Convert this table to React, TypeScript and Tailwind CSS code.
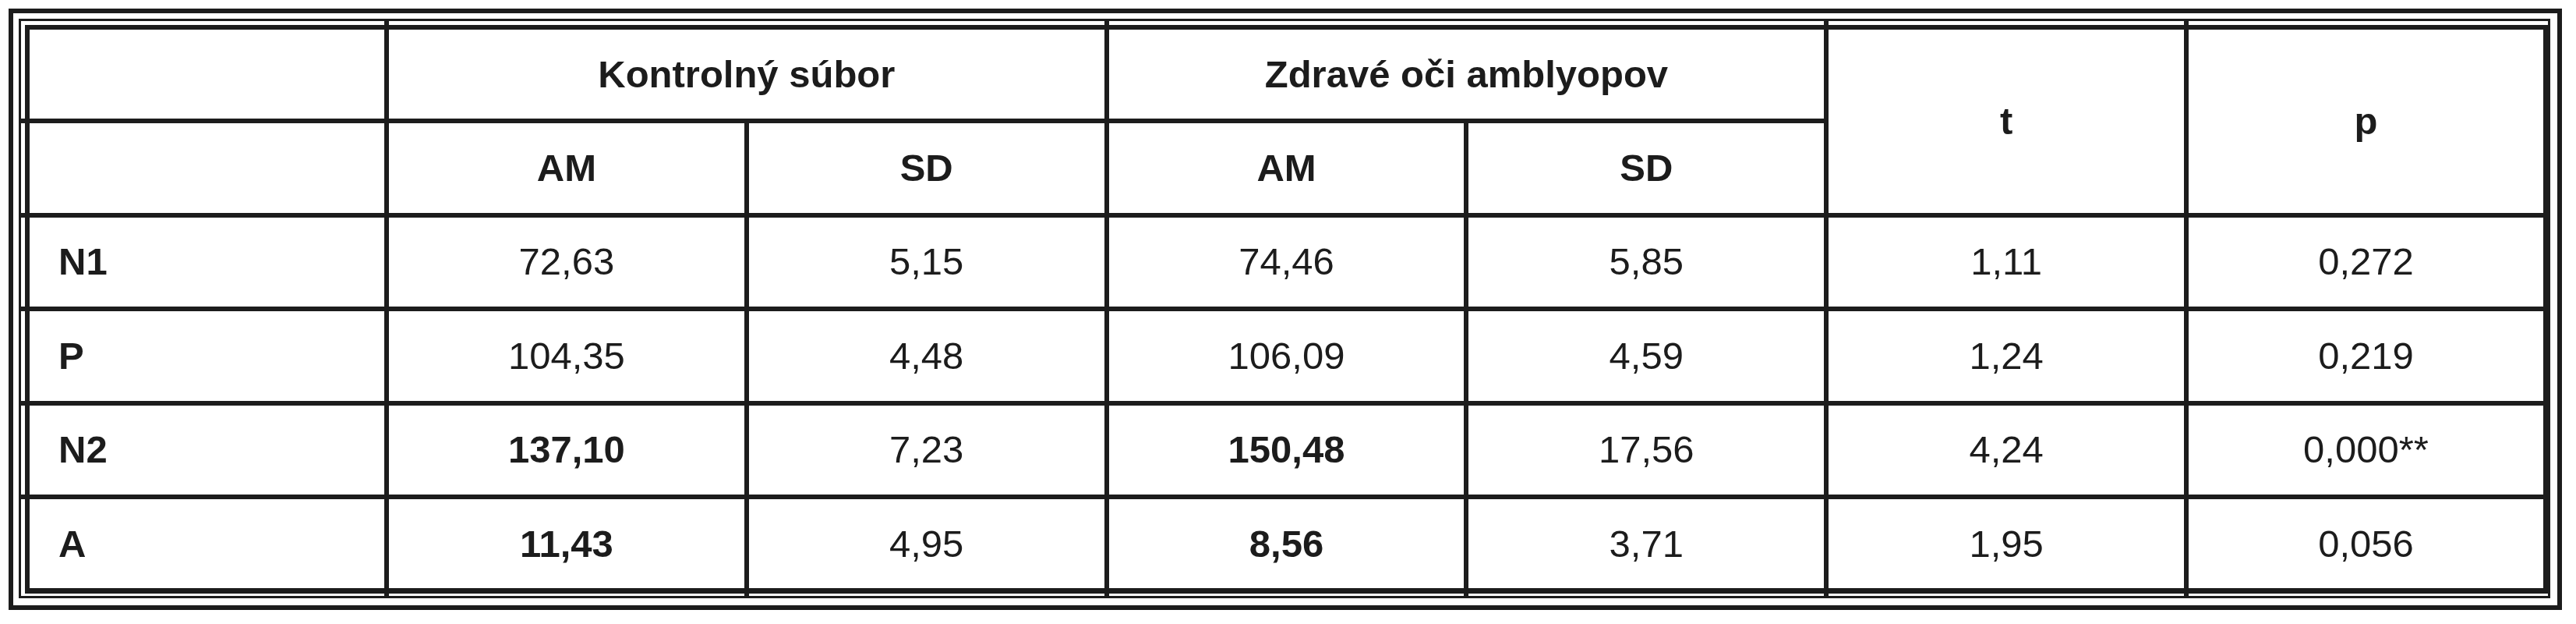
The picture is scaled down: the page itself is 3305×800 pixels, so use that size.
const LINE = "border-[#1c1c1c]";

type CellProps = {
  children?: React.ReactNode;
  className?: string;
  top?: boolean;
  bottom?: boolean;
  left?: boolean;
  right?: boolean;
  align?: "left" | "center";
  bold?: boolean;
};

// edge cells carry the white gap to the thin frame plus the heavy table border
function Cell({ children, className = "", top, bottom, left, right, align = "center", bold }: CellProps) {
  return (
    <div
      className={[
        "bg-white",
        top ? "pt-[5px]" : "",
        bottom ? "pb-[3px]" : "",
        left ? "pl-[5px]" : "",
        className,
      ].join(" ")}
    >
      <div
        className={[
          "flex h-full w-full items-center",
          LINE,
          top ? "border-t-[6px]" : "",
          bottom ? "border-b-[7px]" : "",
          left ? "border-l-[6px]" : "",
          right ? "border-r-[6px]" : "",
          align === "left" ? "justify-start pl-[37px]" : "justify-center",
          bold ? "font-bold" : "",
        ].join(" ")}
      >
        {children}
      </div>
    </div>
  );
}

const rows = [
  { label: "N1", v: ["72,63", "5,15", "74,46", "5,85", "1,11", "0,272"], bold: [] as number[] },
  { label: "P", v: ["104,35", "4,48", "106,09", "4,59", "1,24", "0,219"], bold: [] as number[] },
  { label: "N2", v: ["137,10", "7,23", "150,48", "17,56", "4,24", "0,000**"], bold: [0, 2] },
  { label: "A", v: ["11,43", "4,95", "8,56", "3,71", "1,95", "0,056"], bold: [0, 2] },
];

export default function App() {
  return (
    <div className="h-[800px] w-[3305px] bg-white pl-[11px] pt-[11px] font-['Liberation_Sans',Arial,sans-serif] text-[49px] leading-none text-[#1c1c1c]">
      <div className={`h-[771px] w-[3276px] border-[6px] ${LINE} pb-[9px] pl-[7px] pr-[9px] pt-[7px]`}>
        <div
          className={`grid h-full w-full grid-cols-[466px_repeat(5,minmax(0,1fr))_461px] grid-rows-[125px_repeat(4,minmax(0,1fr))_124px] gap-[6px] border-[3px] ${LINE} bg-[#1c1c1c]`}
        >
          <Cell top left />
          <Cell top bold className="col-span-2">
            Kontrolný súbor
          </Cell>
          <Cell top bold className="col-span-2">
            Zdravé oči amblyopov
          </Cell>
          <Cell top bold className="row-span-2">
            t
          </Cell>
          <Cell top right bold className="row-span-2">
            p
          </Cell>

          <Cell left />
          <Cell bold>AM</Cell>
          <Cell bold>SD</Cell>
          <Cell bold>AM</Cell>
          <Cell bold>SD</Cell>

          {rows.map((r, i) => {
            const last = i === rows.length - 1;
            return [
              <Cell key={r.label} left bottom={last} bold align="left">
                {r.label}
              </Cell>,
              ...r.v.map((val, j) => (
                <Cell key={r.label + j} bottom={last} right={j === 5} bold={r.bold.includes(j)}>
                  {val}
                </Cell>
              )),
            ];
          })}
        </div>
      </div>
    </div>
  );
}
